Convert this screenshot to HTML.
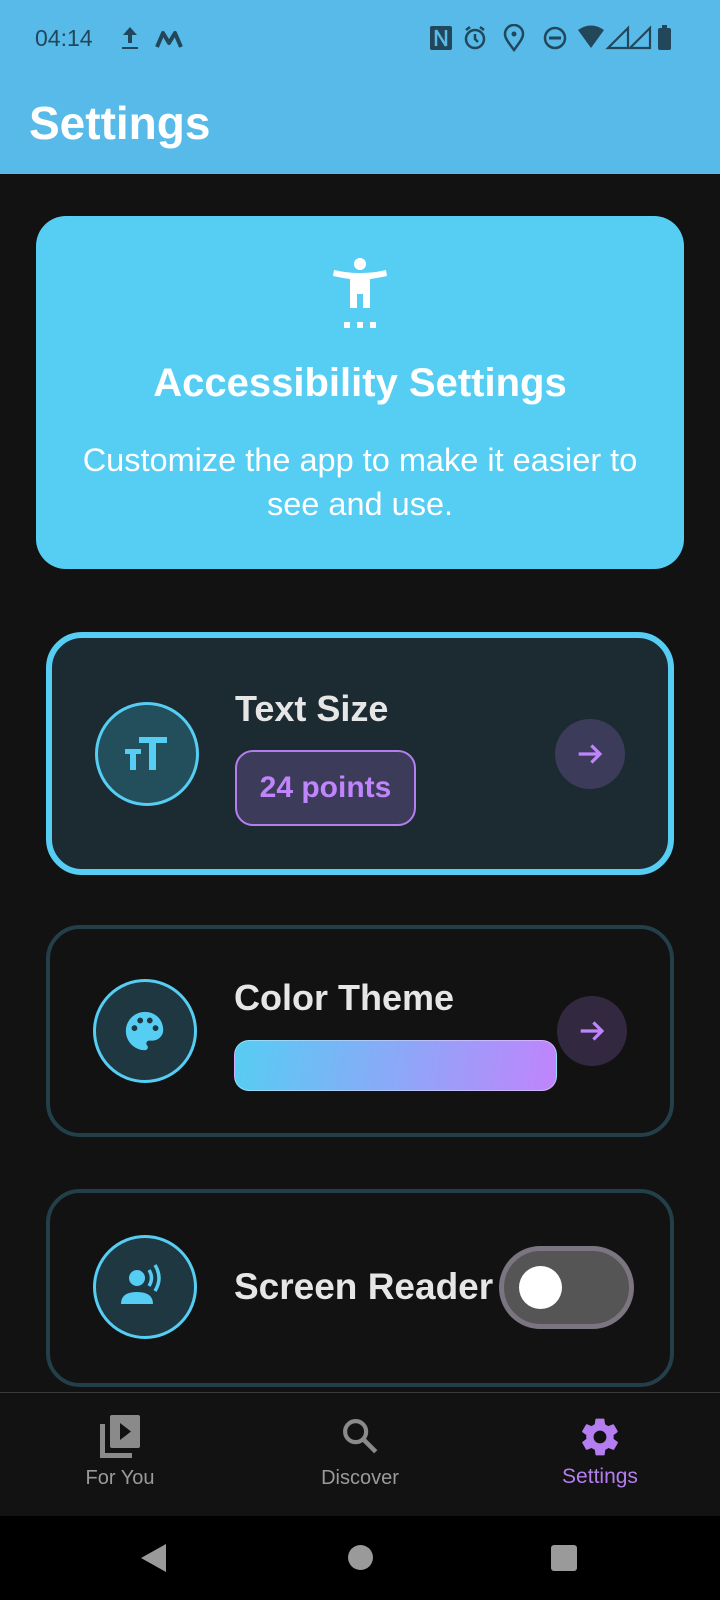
<!DOCTYPE html>
<html><head><meta charset="utf-8"><style>
*{margin:0;padding:0;box-sizing:border-box}
body{width:720px;height:1600px;background:#121212;font-family:"Liberation Sans",sans-serif;position:relative;overflow:hidden}
.a{position:absolute}
.t{color:#e6e6e6;font-weight:bold;font-size:36px;white-space:nowrap}
.circ{position:absolute;width:104px;height:104px;border-radius:50%;border:3px solid #56CDF3;display:flex;align-items:center;justify-content:center}
.arr{position:absolute;width:70px;height:70px;border-radius:50%;display:flex;align-items:center;justify-content:center}
</style></head><body>
<div class="a" style="left:0;top:0;width:720px;height:174px;background:#57BAE8"></div>
<div class="a" style="left:35px;top:25px;font-size:23px;color:#22475A">04:14</div>
<svg class="a" style="left:118px;top:25px" width="24" height="26" viewBox="0 0 24 26"><path d="M12 2 L5 10 H10 V18 H14 V10 H19 Z M4 22 H20 V24 H4Z" fill="#22475A"/></svg>
<svg class="a" style="left:155px;top:29px" width="28" height="20" viewBox="0 0 28 20"><path d="M2 18 L8 4 L14 14 L20 4 L26 18" stroke="#22475A" stroke-width="4" fill="none" stroke-linejoin="round"/></svg>
<svg class="a" style="left:428px;top:24px" width="256" height="28" viewBox="0 0 256 28">
<g fill="#22475A" stroke="#22475A">
<rect x="2" y="2" width="22" height="24" rx="2" stroke="none"/>
<path d="M8 6 V22 M18 6 V22 M8 6 L18 22" stroke="#57BAE8" stroke-width="2.5" fill="none"/>
<circle cx="47" cy="15" r="9" fill="none" stroke-width="2.5"/><path d="M47 10 V15 L50 18 M38 6 L42 3 M56 6 L52 3" fill="none" stroke-width="2.5"/>
<path d="M86 26 C80 18 77 14 77 10 A9 9 0 0 1 95 10 C95 14 92 18 86 26Z" fill="none" stroke-width="2.5"/><circle cx="86" cy="10" r="2.5" stroke="none"/>
<circle cx="127" cy="14" r="10" fill="none" stroke-width="2.5"/><rect x="121" y="12.5" width="12" height="3" stroke="none"/>
<path d="M150 6 Q163 -3 176 6 L163 24Z" stroke="none"/>
<path d="M180 24 L200 4 V24Z M202 24 L222 4 V24Z" fill="none" stroke-width="2.2"/>
<rect x="230" y="4" width="13" height="22" rx="2" stroke="none"/><rect x="234" y="1" width="5" height="4" stroke="none"/>
</g></svg>
<div class="a" style="left:29px;top:96px;font-size:46px;font-weight:bold;color:#fff">Settings</div>

<div class="a" style="left:36px;top:216px;width:648px;height:353px;background:#56CDF3;border-radius:30px"></div>
<svg class="a" style="left:332px;top:256px" width="56" height="74" viewBox="0 0 56 74">
<g fill="#fff"><circle cx="28" cy="8" r="6"/><path d="M2 14 Q28 20 54 14 L55 20 Q46 22 38 23 V52 H31 V38 H25 V52 H18 V23 Q10 22 1 20Z"/>
<rect x="12" y="66" width="6" height="6"/><rect x="25" y="66" width="6" height="6"/><rect x="38" y="66" width="6" height="6"/></g></svg>
<div class="a" style="left:36px;width:648px;top:361px;text-align:center;font-size:40px;font-weight:bold;color:#fff">Accessibility Settings</div>
<div class="a" style="left:36px;width:648px;top:438px;text-align:center;font-size:32.5px;line-height:44px;color:#fff;white-space:nowrap">Customize the app to make it easier to<br>see and use.</div>

<div class="a" style="left:46px;top:632px;width:628px;height:243px;border:6px solid #56CDF3;border-radius:36px;background:#1C2A32"></div>
<div class="circ" style="left:95px;top:702px;background:#234E5C"><svg width="44" height="34" viewBox="0 0 44 34"><g fill="#56CDF3"><rect x="14" y="0" width="28" height="6"/><rect x="24" y="0" width="7" height="33"/><rect x="0" y="12" width="16" height="5"/><rect x="5" y="12" width="6" height="21"/></g></svg></div>
<div class="a t" style="left:235px;top:688px">Text Size</div>
<div class="a" style="left:235px;top:750px;width:181px;height:76px;border:2px solid #B57EF0;border-radius:18px;background:#3C3C5A;color:#C084FC;font-size:30px;font-weight:bold;display:flex;align-items:center;justify-content:center">24 points</div>
<div class="arr" style="left:555px;top:719px;background:#3C3C5A"><svg width="34" height="34" viewBox="0 0 24 24"><path d="M4 12 H19 M13 6 L19 12 L13 18" stroke="#C084FC" stroke-width="2.3" fill="none"/></svg></div>

<div class="a" style="left:46px;top:925px;width:628px;height:212px;border:4px solid #223F4A;border-radius:34px"></div>
<div class="circ" style="left:93px;top:979px;background:#1E3740"><svg width="46" height="46" viewBox="0 0 24 24"><path fill="#56CDF3" d="M12 2C6.5 2 2 6.5 2 12s4.5 10 10 10c.9 0 1.5-.7 1.5-1.5 0-.4-.2-.8-.4-1-.3-.3-.4-.6-.4-1 0-.8.7-1.5 1.5-1.5H16c3 0 5.5-2.5 5.5-5.5C21.5 6 17.3 2 12 2zM6.5 12c-.8 0-1.5-.7-1.5-1.5S5.7 9 6.5 9 8 9.7 8 10.5 7.3 12 6.5 12zm3-4C8.7 8 8 7.3 8 6.5S8.7 5 9.5 5s1.5.7 1.5 1.5S10.3 8 9.5 8zm5 0c-.8 0-1.5-.7-1.5-1.5S13.7 5 14.5 5s1.5.7 1.5 1.5S15.3 8 14.5 8zm3 4c-.8 0-1.5-.7-1.5-1.5S16.7 9 17.5 9s1.5.7 1.5 1.5-.7 1.5-1.5 1.5z"/></svg></div>
<div class="a t" style="left:234px;top:977px">Color Theme</div>
<div class="a" style="left:234px;top:1040px;width:323px;height:51px;border-radius:15px;border:1.5px solid rgba(255,255,255,.35);background:linear-gradient(100deg,#56CDF3,#C084FC)"></div>
<div class="arr" style="left:557px;top:996px;background:#322840"><svg width="34" height="34" viewBox="0 0 24 24"><path d="M4 12 H19 M13 6 L19 12 L13 18" stroke="#C084FC" stroke-width="2.3" fill="none"/></svg></div>

<div class="a" style="left:46px;top:1189px;width:628px;height:198px;border:4px solid #223F4A;border-radius:34px"></div>
<div class="circ" style="left:93px;top:1235px;background:#1E3740"><svg width="52" height="46" viewBox="0 0 52 46"><g fill="#56CDF3"><circle cx="18" cy="14" r="8"/><path d="M2 40 Q2 28 18 28 Q34 28 34 40Z"/><path d="M30 6 Q35 14 30 22" stroke="#56CDF3" stroke-width="3.5" fill="none"/><path d="M36 1 Q44 14 36 27" stroke="#56CDF3" stroke-width="3.5" fill="none"/></g></svg></div>
<div class="a t" style="left:234px;top:1266px;font-size:37px">Screen Reader</div>
<div class="a" style="left:499px;top:1246px;width:135px;height:83px;border-radius:42px;background:#555;border:5px solid #7A7580"></div>
<div class="a" style="left:519px;top:1266px;width:43px;height:43px;border-radius:50%;background:#fff"></div>

<div class="a" style="left:0;top:1392px;width:720px;height:124px;background:#121212;border-top:1.5px solid #3a3a3a"></div>
<svg class="a" style="left:98px;top:1414px" width="44" height="44" viewBox="0 0 44 44"><g fill="#8a8a8a"><rect x="2" y="10" width="5" height="34"/><rect x="2" y="39" width="32" height="5"/><rect x="12" y="1" width="30" height="33" rx="2"/></g><path d="M22 9 V26 L33 17.5Z" fill="#121212"/></svg>
<svg class="a" style="left:339px;top:1415px" width="42" height="42" viewBox="0 0 24 24"><circle cx="9.5" cy="9.5" r="6" stroke="#8a8a8a" stroke-width="2.4" fill="none"/><path d="M14 14 L21 21" stroke="#8a8a8a" stroke-width="2.6"/></svg>
<svg class="a" style="left:578px;top:1415px" width="44" height="44" viewBox="0 0 24 24"><path fill="#B57EF0" d="M19.4 13c.04-.3.06-.7.06-1s-.02-.7-.07-1l2.1-1.6c.2-.15.24-.42.12-.64l-2-3.46c-.12-.22-.39-.3-.61-.22l-2.5 1c-.5-.4-1.1-.7-1.7-1l-.4-2.6C14.4 2.2 14.2 2 14 2h-4c-.25 0-.46.18-.5.42l-.38 2.65c-.6.25-1.17.6-1.7 1l-2.5-1c-.22-.1-.49 0-.61.22l-2 3.46c-.13.22-.07.49.12.64L4.57 11c-.04.3-.07.7-.07 1s.02.7.07 1l-2.1 1.65c-.2.15-.25.42-.12.64l2 3.46c.12.22.39.3.61.22l2.5-1c.5.4 1.1.7 1.7 1l.38 2.65c.04.24.25.42.5.42h4c.25 0 .46-.18.5-.42l.38-2.65c.6-.25 1.17-.6 1.7-1l2.5 1c.22.08.49 0 .61-.22l2-3.46c.12-.22.07-.49-.12-.64L19.4 13zM12 15.5c-1.93 0-3.5-1.57-3.5-3.5s1.57-3.5 3.5-3.5 3.5 1.57 3.5 3.5-1.57 3.5-3.5 3.5z"/></svg>
<div class="a" style="left:40px;width:160px;top:1467px;text-align:center;font-size:20px;color:#9a9a9a">For You</div>
<div class="a" style="left:280px;width:160px;top:1467px;text-align:center;font-size:20px;color:#9a9a9a">Discover</div>
<div class="a" style="left:520px;width:160px;top:1465px;text-align:center;font-size:21px;color:#B57EF0">Settings</div>

<div class="a" style="left:0;top:1516px;width:720px;height:84px;background:#000"></div>
<svg class="a" style="left:140px;top:1543px" width="28" height="30"><path d="M26 1 V29 L1 15Z" fill="#9a9a9a"/></svg>
<div class="a" style="left:348px;top:1545px;width:25px;height:25px;border-radius:50%;background:#9a9a9a"></div>
<div class="a" style="left:551px;top:1545px;width:26px;height:26px;border-radius:3px;background:#9a9a9a"></div>
</body></html>
